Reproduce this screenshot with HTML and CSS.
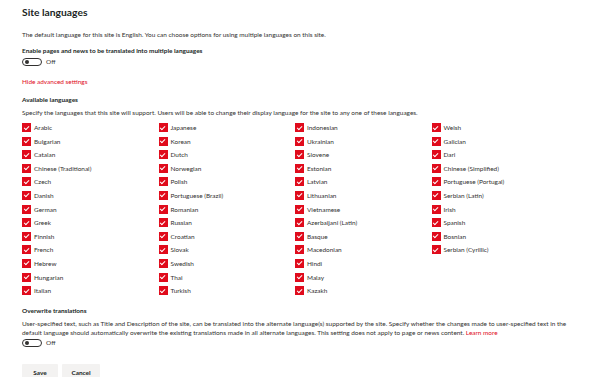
FILE: index.html
```html
<!DOCTYPE html>
<html lang="en">
<head>
<meta charset="utf-8">
<title>Site languages</title>
<link rel="stylesheet" href="styles.css">
</head>
<body>
<main class="page">
  <h1 class="title">Site languages</h1>
  <p class="desc">The default language for this site is English. You can choose options for using multiple languages on this site.</p>

  <div class="label">Enable pages and news to be translated into multiple languages</div>
  <div class="toggle-row"><span class="toggle"><span class="knob"></span></span><span class="toggle-text">Off</span></div>

  <a class="link advanced">Hide advanced settings</a>

  <div class="label section">Available languages</div>
  <p class="desc spec">Specify the languages that this site will support. Users will be able to change their display language for the site to any one of these languages.</p>

  <div class="langs">
    <label class="lang"><span class="cb"></span>Arabic</label>
    <label class="lang"><span class="cb"></span>Bulgarian</label>
    <label class="lang"><span class="cb"></span>Catalan</label>
    <label class="lang"><span class="cb"></span>Chinese (Traditional)</label>
    <label class="lang"><span class="cb"></span>Czech</label>
    <label class="lang"><span class="cb"></span>Danish</label>
    <label class="lang"><span class="cb"></span>German</label>
    <label class="lang"><span class="cb"></span>Greek</label>
    <label class="lang"><span class="cb"></span>Finnish</label>
    <label class="lang"><span class="cb"></span>French</label>
    <label class="lang"><span class="cb"></span>Hebrew</label>
    <label class="lang"><span class="cb"></span>Hungarian</label>
    <label class="lang"><span class="cb"></span>Italian</label>

    <label class="lang"><span class="cb"></span>Japanese</label>
    <label class="lang"><span class="cb"></span>Korean</label>
    <label class="lang"><span class="cb"></span>Dutch</label>
    <label class="lang"><span class="cb"></span>Norwegian</label>
    <label class="lang"><span class="cb"></span>Polish</label>
    <label class="lang"><span class="cb"></span>Portuguese (Brazil)</label>
    <label class="lang"><span class="cb"></span>Romanian</label>
    <label class="lang"><span class="cb"></span>Russian</label>
    <label class="lang"><span class="cb"></span>Croatian</label>
    <label class="lang"><span class="cb"></span>Slovak</label>
    <label class="lang"><span class="cb"></span>Swedish</label>
    <label class="lang"><span class="cb"></span>Thai</label>
    <label class="lang"><span class="cb"></span>Turkish</label>

    <label class="lang"><span class="cb"></span>Indonesian</label>
    <label class="lang"><span class="cb"></span>Ukrainian</label>
    <label class="lang"><span class="cb"></span>Slovene</label>
    <label class="lang"><span class="cb"></span>Estonian</label>
    <label class="lang"><span class="cb"></span>Latvian</label>
    <label class="lang"><span class="cb"></span>Lithuanian</label>
    <label class="lang"><span class="cb"></span>Vietnamese</label>
    <label class="lang"><span class="cb"></span>Azerbaijani (Latin)</label>
    <label class="lang"><span class="cb"></span>Basque</label>
    <label class="lang"><span class="cb"></span>Macedonian</label>
    <label class="lang"><span class="cb"></span>Hindi</label>
    <label class="lang"><span class="cb"></span>Malay</label>
    <label class="lang"><span class="cb"></span>Kazakh</label>

    <label class="lang"><span class="cb"></span>Welsh</label>
    <label class="lang"><span class="cb"></span>Galician</label>
    <label class="lang"><span class="cb"></span>Dari</label>
    <label class="lang"><span class="cb"></span>Chinese (Simplified)</label>
    <label class="lang"><span class="cb"></span>Portuguese (Portugal)</label>
    <label class="lang"><span class="cb"></span>Serbian (Latin)</label>
    <label class="lang"><span class="cb"></span>Irish</label>
    <label class="lang"><span class="cb"></span>Spanish</label>
    <label class="lang"><span class="cb"></span>Bosnian</label>
    <label class="lang"><span class="cb"></span>Serbian (Cyrillic)</label>
  </div>

  <div class="label overwrite">Overwrite translations</div>
  <p class="desc para">User-specified text, such as Title and Description of the site, can be translated into the alternate language(s) supported by the site. Specify whether the changes made to user-specified text in the default language should automatically overwrite the existing translations made in all alternate languages. This setting does not apply to page or news content. <a class="link">Learn more</a></p>
  <div class="toggle-row"><span class="toggle"><span class="knob"></span></span><span class="toggle-text">Off</span></div>

  <div class="actions">
    <button class="btn">Save</button>
    <button class="btn">Cancel</button>
  </div>
</main>
</body>
</html>
```

FILE: styles.css
```css
* { box-sizing: border-box; }
html, body { margin: 0; padding: 0; background: #fff; }
body {
  font-family: Lato, "Open Sans", "Liberation Sans", sans-serif;
  color: #323130;
  font-size: 6.45px;
}
.page {
  padding: 4px 21px 0 22px;
}
.title {
  margin: 0;
  font-size: 10.3px;
  line-height: 16px;
  font-weight: 700;
  color: #201f1e;
}
.desc {
  margin: 0;
  line-height: 9px;
}
.title + .desc { margin-top: 10px; }
.label {
  font-weight: 700;
  color: #201f1e;
  line-height: 9px;
  margin-top: 7px;
}
.toggle-row {
  display: flex;
  align-items: center;
  gap: 4px;
  height: 9px;
  margin-top: 2px;
}
.toggle {
  width: 20px;
  height: 8px;
  border: 1px solid #323130;
  border-radius: 4px;
  display: flex;
  align-items: center;
  padding-left: 2px;
}
.knob {
  width: 4px;
  height: 4px;
  border-radius: 50%;
  background: #323130;
}
.toggle-text { color: #323130; }
.link { color: #e00b1c; text-decoration: none; }
.advanced {
  display: block;
  line-height: 9px;
  margin-top: 11px;
}
.label.section { margin-top: 9px; }
.spec { margin-top: 4px; }
.langs {
  margin-top: 6px;
  display: grid;
  grid-template-columns: repeat(4, 1fr);
  grid-template-rows: repeat(13, 9px);
  grid-auto-flow: column;
  row-gap: 4.6px;
}
.lang {
  display: flex;
  align-items: center;
  gap: 3px;
  line-height: 9px;
  white-space: nowrap;
}
.cb {
  flex: none;
  width: 9px;
  height: 9px;
  background: #e00b1c;
  position: relative;
}
.cb::after {
  content: "";
  position: absolute;
  left: 2.6px;
  top: 1.5px;
  width: 2.2px;
  height: 4.2px;
  border: solid #fff;
  border-width: 0 1px 1px 0;
  transform: rotate(45deg);
}
.label.overwrite { margin-top: 11px; }
.para { margin-top: 4px; }
.para + .toggle-row { margin-top: 1px; }
.actions {
  display: flex;
  gap: 4px;
  margin-top: 17px;
}
.btn {
  font-family: inherit;
  font-size: 6.45px;
  font-weight: 700;
  color: #201f1e;
  background: #f3f2f1;
  border: none;
  border-radius: 1px;
  height: 17px;
  padding: 0;
  width: 36px;
}
.btn + .btn { width: 38px; }
```
